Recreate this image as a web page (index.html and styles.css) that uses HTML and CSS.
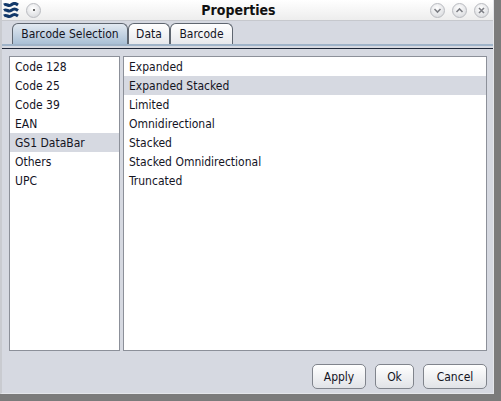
FILE: index.html
```html
<!DOCTYPE html>
<html lang="en">
<head>
   <meta charset="UTF-8">
   <title>Properties</title>
   <link rel="stylesheet" href="styles.css">
</head>
<body>
   <div class="window">
      <div class="titlebar">
         <div class="title-left">
            <svg class="logo" width="16" height="17" viewBox="0 0 16 17">
               <path d="M1 3 C4 1 5 5 8 3 S12 1 15 3" />
               <path d="M1 8.5 C4 6.5 5 10.5 8 8.5 S12 6.5 15 8.5" />
               <path d="M1 14 C4 12 5 16 8 14 S12 12 15 14" />
            </svg>
            <span class="round-btn"><span class="dot"></span></span>
         </div>
         <div class="title">Properties</div>
         <div class="title-right">
            <span class="round-btn">
               <svg width="9" height="9" viewBox="0 0 9 9"><path d="M1.5 3 L4.5 6 L7.5 3" /></svg>
            </span>
            <span class="round-btn">
               <svg width="9" height="9" viewBox="0 0 9 9"><path d="M1.5 6 L4.5 3 L7.5 6" /></svg>
            </span>
            <span class="round-btn">
               <svg width="9" height="9" viewBox="0 0 9 9"><path d="M2 2 L7 7 M7 2 L2 7" /></svg>
            </span>
         </div>
      </div>

      <div class="tabs">
         <div class="tab tab-selection active">Barcode Selection</div>
         <div class="tab tab-data">Data</div>
         <div class="tab tab-barcode">Barcode</div>
      </div>

      <div class="pane">
         <div class="lists">
            <ul class="list list-types">
               <li>Code 128</li>
               <li>Code 25</li>
               <li>Code 39</li>
               <li>EAN</li>
               <li class="selected">GS1 DataBar</li>
               <li>Others</li>
               <li>UPC</li>
            </ul>
            <ul class="list list-variants">
               <li>Expanded</li>
               <li class="selected">Expanded Stacked</li>
               <li>Limited</li>
               <li>Omnidirectional</li>
               <li>Stacked</li>
               <li>Stacked Omnidirectional</li>
               <li>Truncated</li>
            </ul>
         </div>
         <div class="buttons">
            <button class="btn btn-apply">Apply</button>
            <button class="btn btn-ok">Ok</button>
            <button class="btn btn-cancel">Cancel</button>
         </div>
      </div>
   </div>
</body>
</html>
```

FILE: styles.css
```css
body {
   margin: 0;
   padding: 0;
   background-color: #7b7b7b;
   font-family: "DejaVu Sans Condensed", "DejaVu Sans", sans-serif;
   font-size: 12px;
   color: #14141f;
}

.window {
   width: 494px;
   height: 394px;
   box-sizing: border-box;
   background-color: #d6d9e1;
   border-left: 2px solid #c9cbd0;
   border-right: 1px solid #e4e6ea;
   border-bottom: 1px solid #e4e6ea;
   display: flex;
   flex-direction: column;
}

/* Title bar */
.titlebar {
   height: 21px;
   box-sizing: border-box;
   display: flex;
   align-items: center;
   background: linear-gradient(#ffffff, #ededed);
   border-bottom: 1px solid #c6c8cd;
}

.title-left,
.title-right {
   display: flex;
   align-items: center;
}

.title-left {
   padding-left: 1px;
   gap: 7px;
}

.title-right {
   gap: 7px;
   padding-right: 4px;
}

.logo path {
   fill: none;
   stroke: #11386a;
   stroke-width: 3.2;
}

.title {
   flex: 1;
   text-align: center;
   font-weight: bold;
   font-size: 14px;
   color: #111;
   padding-left: 6px;
}

.round-btn {
   width: 15px;
   height: 15px;
   box-sizing: border-box;
   border-radius: 50%;
   border: 1px solid #b9bbc0;
   background: radial-gradient(circle at 45% 35%, #ffffff, #d2d4d8);
   display: flex;
   align-items: center;
   justify-content: center;
}

.round-btn .dot {
   width: 2px;
   height: 2px;
   background-color: #666;
}

.round-btn svg path {
   fill: none;
   stroke: #7d7f85;
   stroke-width: 1.6;
}

/* Tabs */
.tabs {
   display: flex;
   padding: 2px 0 0 10px;
   border-bottom: 2px solid #9fb3c8;
}

.tab {
   height: 21px;
   box-sizing: border-box;
   padding-top: 3px;
   text-align: center;
   border: 1px solid #5f6670;
   border-bottom: none;
   border-radius: 6px 6px 0 0;
   background: linear-gradient(#ffffff, #e7e8ec);
   font-size: 12px;
}

.tab-selection {
   width: 116px;
}

.tab-data {
   width: 42px;
}

.tab-barcode {
   width: 63px;
}

.tab.active {
   background: linear-gradient(#e2e9f1, #a9bfd5);
}

/* Content */
.pane {
   flex: 1;
   margin-top: 2px;
   border-top: 1px solid #1d2536;
   padding: 7px 6px 0 7px;
   display: flex;
   flex-direction: column;
}

.lists {
   display: flex;
   gap: 3px;
   height: 295px;
}

.list {
   margin: 0;
   padding: 0;
   list-style: none;
   background-color: #fff;
   border: 1px solid #8c9099;
}

.list-types {
   width: 111px;
   box-sizing: border-box;
}

.list-variants {
   flex: 1;
}

.list li {
   height: 19px;
   box-sizing: border-box;
   padding: 2px 0 0 5px;
   line-height: 17px;
}

.list li.selected {
   background-color: #d6d9e1;
}

/* Buttons */
.buttons {
   display: flex;
   justify-content: flex-end;
   gap: 9px;
   margin-top: 13px;
}

.btn {
   height: 25px;
   box-sizing: border-box;
   border: 1px solid #80848c;
   border-radius: 5px;
   background: linear-gradient(#ffffff, #e1e3e7);
   font-family: "DejaVu Sans Condensed", "DejaVu Sans", sans-serif;
   font-size: 12px;
   color: #14141f;
   padding: 0;
}

.btn-apply {
   width: 54px;
}

.btn-ok {
   width: 39px;
}

.btn-cancel {
   width: 64px;
}
```
